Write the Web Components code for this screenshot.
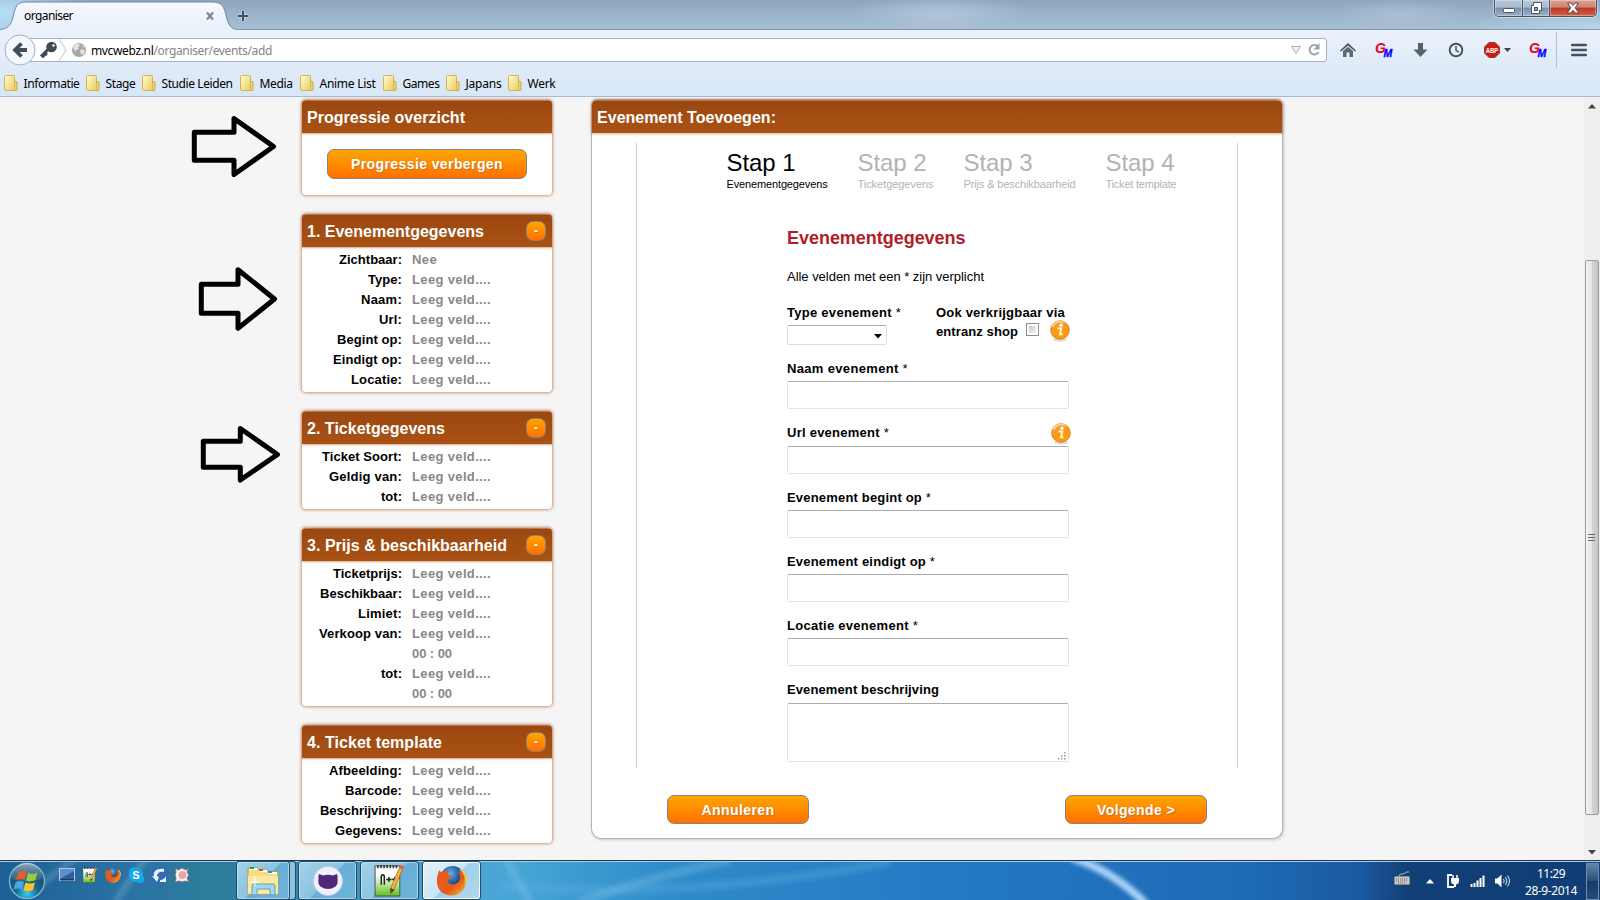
<!DOCTYPE html>
<html lang="nl">
<head>
<meta charset="utf-8">
<title>organiser</title>
<style>
html,body{margin:0;height:900px;overflow:hidden;background:#f5f5f5}
body{font:13px "Liberation Sans",Arial,sans-serif;color:#000}
</style>
</head>
<body>
<desktop-screen></desktop-screen>
<script>
const define = (name, html) => customElements.define(name, class extends HTMLElement {
  constructor() {
    super();
    const t = document.createElement('template');
    t.innerHTML = typeof html === 'function' ? html(this) : html;
    this.attachShadow({ mode: 'open' }).append(t.content.cloneNode(true));
  }
});
const UI = '"Noto Sans","Open Sans",sans-serif';

/* ---------- browser chrome ---------- */
define('window-controls', `<style>
:host{display:flex;height:17px;border:1px solid #46586e;border-top:0;border-radius:0 0 5px 5px;overflow:hidden;box-sizing:border-box;width:103px;box-shadow:0 0 0 1px #ffffff66}
span{display:flex;align-items:center;justify-content:center;background:linear-gradient(#b9c8da,#a9bacf 45%,#7890ad 50%,#9db1ca);border-right:1px solid #46586e;box-sizing:border-box;box-shadow:inset 0 0 0 1px #ffffff55}
.a{width:28px}.b{width:27px}.c{flex:1;border:0;background:linear-gradient(#dba294,#cf8272 45%,#b93a23 50%,#d1614a)}
svg{display:block}.a svg{margin-top:4px}</style>
<span class="a"><svg width="14" height="8"><rect x="1.500" y="2.500" width="11" height="4" rx="1" fill="#fff" stroke="#4c5565"/></svg></span>
<span class="b"><svg width="13" height="13"><path d="M3.500 .5h8v8h-2v3h-8v-8h2z" fill="#fff" stroke="#4c5565"/><rect x="4.500" y="5.500" width="3" height="3" fill="#8da0ba" stroke="#4c5565"/></svg></span>
<span class="c"><svg width="14" height="12" viewBox="0 0 14 12"><path d="M1.500 1h3.500l2 2.500L9 1h3.500L9.200 5.800 12.800 11H9L7 8.200 5 11H1.200l3.600-5.200z" fill="#fff" stroke="#56404a"/></svg></span>`);

define('tab-strip', `<style>
:host{display:flex;height:30px;align-items:flex-start;box-sizing:border-box;border-bottom:1px solid #8098b4;
background:radial-gradient(ellipse 90px 40px at 0 12px,#b8def8,#b8def800),radial-gradient(ellipse 130px 26px at 1595px 30px,#b6d6ec,#b6d6ec00),radial-gradient(ellipse 90px 18px at 940px 14px,#b0c5d9,#b0c5d900),radial-gradient(ellipse 70px 16px at 1400px 16px,#abbfd3,#abbfd300),linear-gradient(#8fa5be,#9bb3cb 50%,#a6bfd4)}
.tab{position:relative;width:235px;height:30px;display:flex;align-items:center}
.tab svg.s{position:absolute;left:0;top:0}
fit-text{position:relative;margin:1px 0 0 24px;font:12px ${UI}}
.x{position:relative;margin:1px 20px 0 auto}
.plus{margin:9px 0 0 1px}
window-controls{margin-left:auto;margin-right:3px}</style>
<div class="tab"><svg class="s" width="236" height="30"><defs><linearGradient id="g" x2="0" y2="1"><stop offset="0" stop-color="#f6f9fd"/><stop offset="1" stop-color="#e9f0fa"/></linearGradient></defs>
<path d="M-2 30V29.500C8 29.500 11 25 13 17 15 7 17 2 26 2H213C222 2 224 7 226 15 228 25 231 29.500 238 29.500V30z" fill="url(#g)"/><path d="M-2 29.500C8 29.500 11 25 13 17 15 7 17 2 26 2H213C222 2 224 7 226 15 228 25 231 29.500 238 29.500" fill="none" stroke="#6f88a6"/></svg>
<fit-text w="49">organiser</fit-text>
<svg class="x" width="10" height="10"><path d="M2 1.500 8 8.500M8 1.500 2 8.500" stroke="#7c8794" stroke-width="2.300"/></svg></div>
<svg class="plus" width="14" height="14"><path d="M7 2v10M2 7h10" stroke="#fff6" stroke-width="4"/><path d="M7 2v10M2 7h10" stroke="#3e5061" stroke-width="2"/></svg>
<window-controls></window-controls>`);

define('gm-icon', `<style>:host{display:block;width:18px;height:18px}svg{display:block;overflow:visible}</style>
<svg width="18" height="18" viewBox="0 0 18 18"><text x="0" y="12" font-family="Liberation Sans" font-size="14" font-style="italic" font-weight="bold" fill="#f00014">G<tspan x="8.500" y="15.500" font-size="10.500" fill="#00f" stroke="#00f" stroke-width=".3">M</tspan></text></svg>`);

define('nav-bar', `<style>
:host{display:flex;height:38px;align-items:center;box-sizing:border-box;padding-top:2px;background:linear-gradient(#eaf1fb,#e0ebf8)}
.back{flex:none;position:relative;z-index:1;margin-left:4px}
.url{margin-left:-8px;width:1299px;height:24px;box-sizing:border-box;background:#fff;border:1px solid #a3b4c9;border-radius:0 3px 3px 0;display:flex;align-items:center;padding-left:10px;flex:none;font:12px ${UI}}
.url svg{display:block;flex:none}
i{font-style:normal;color:#848484}
.tools{flex:1;display:grid;grid-template-columns:36px 36px 36px 36px 48px 32px 6px 38px;padding-left:3px;align-items:center;justify-items:center}
.tools svg{display:block}</style>
<svg class="back" width="32" height="32"><circle cx="16" cy="16" r="15" fill="#f4f8fd" stroke="#9fb2ca"/><path d="M17.500 9.500 11 16l6.500 6.500M11.500 16H23" fill="none" stroke="#414d59" stroke-width="3.800"/></svg>
<div class="url"><svg width="20" height="18" viewBox="0 0 20 18"><circle cx="12.500" cy="6" r="5.300" fill="#3f4b56"/><circle cx="14.500" cy="4.500" r="1.200" fill="#fff"/><path d="M9.500 8 2 15.500M3 14.500 5.500 15.800M5.500 12 8 14" stroke="#3f4b56" stroke-width="3"/></svg>
<svg style="margin-left:-1px" width="9" height="22"><path d="M1 0 8 11 1 22" fill="none" stroke="#cfd3d8" stroke-width="1.200"/></svg>
<svg style="margin-left:4px" width="16" height="16"><circle cx="8" cy="8" r="7" fill="#a6a6a6"/><path d="M2 5c2-3 4-3.500 6-3l1 2-2 1 1 2-3 1-1 2zM9 8l3-1 2 2-2 4-2-1zM11 3l2 1 1 2-2-1z" fill="#e3e3e3"/></svg>
<fit-text w="181" style="margin-left:4px">mvcwebz.nl<i>/organiser/events/add</i></fit-text>
<svg style="margin-left:auto;margin-right:5px" width="12" height="10"><path d="M1.500 1.500h9L6 8.500z" fill="#eceff2" stroke="#aab2bc"/></svg>
<svg style="margin-right:5px" width="14" height="14"><path d="M11 3.800A4.700 4.700 0 1 0 11.500 9" fill="none" stroke="#9aa5b1" stroke-width="2"/><path d="M12.500 0v6.500H6.500z" fill="#9aa5b1"/></svg></div>
<div class="tools">
<svg width="16" height="16"><path d="M0 8.500 8 1l8 7.500-1 1L8 3.500 1 9.500z" fill="#4a545e"/><path d="M3 9 8 4.700 13 9v6H9.500v-4.500h-3V15H3z" fill="#5d6873"/></svg>
<gm-icon></gm-icon>
<svg width="15" height="16"><path d="M5 1h5v6.500h4.500L7.500 15 .5 7.500H5z" fill="#56616c"/></svg>
<svg width="16" height="16"><circle cx="8" cy="8" r="6.300" fill="none" stroke="#4a545f" stroke-width="2"/><path d="M8 4v4.300l2.800 1.800" fill="none" stroke="#4a545f" stroke-width="1.500"/></svg>
<svg width="28" height="16"><path d="M5 .5h6L15.500 5v6L11 15.500H5L.5 11V5z" fill="#ce1b10" stroke="#8f3a34"/><text x="8" y="11" text-anchor="middle" font-family="Liberation Sans" font-size="8" font-weight="bold" fill="#fff" textLength="12.500" lengthAdjust="spacingAndGlyphs">ABP</text><path d="M20 6h7l-3.500 4z" fill="#444"/></svg>
<gm-icon></gm-icon>
<svg width="2" height="36"><path d="M.5 0v36" stroke="#b2bfcf"/></svg>
<svg width="16" height="14"><path d="M1.200 2h13.600M1.200 7h13.600M1.200 12h13.600" stroke="#45515d" stroke-width="2.500" stroke-linecap="round"/></svg>
</div>`);

define('book-mark', `<style>:host{display:flex;align-items:center;gap:5.500px;font:12px ${UI}}svg{display:block;flex:none;margin-top:-1px}</style>
<svg width="14" height="17"><defs><linearGradient id="g" x2="1" y2="1"><stop offset="0" stop-color="#fffbd0"/><stop offset="1" stop-color="#eacb63"/></linearGradient></defs><rect x="8" y="6.500" width="5" height="9" rx="1" fill="#f0d777" stroke="#c7a33c"/><rect x=".5" y=".5" width="10" height="15" rx="1" fill="url(#g)" stroke="#d5b54e"/></svg><slot></slot>`);

define('bookmark-bar', `<style>:host{display:grid;grid-template-columns:82px 56px 98px 60px 83px 63px 62px 60px;padding-left:4px;height:29px;box-sizing:border-box;border-bottom:1px solid #a6bbd3;background:linear-gradient(#dfeaf8,#d8e7f7);padding-top:3px;white-space:nowrap}</style>
${[['Informatie',56],['Stage',30],['Studie Leiden',71],['Media',33],['Anime List',56],['Games',37],['Japans',36],['Werk',28]].map(b=>`<book-mark><fit-text w="${b[1]}">${b[0]}</fit-text></book-mark>`).join('')}`);

/* ---------- site widgets ---------- */
define('orange-button', `<style>:host{display:flex;align-items:center;justify-content:center;box-sizing:border-box;border:1px solid #8b8378;border-radius:7px;background:linear-gradient(#fba505,#ff9000 40%,#ff7000);color:#fff;font-weight:bold;font-size:14px;text-shadow:1px 1px 1px #9a6a3a99}</style><slot></slot>`);

define('side-card', h => `<style>
:host{display:block;width:250px;background:#fff;border-radius:4px;box-shadow:0 0 3px 1px #b5632fa8}
header{height:33px;box-sizing:border-box;padding:0 6px 0 5px;display:flex;align-items:center;justify-content:space-between;background:linear-gradient(#b57a55 1px,#9a4710 1px,#aa5214);border-radius:4px 4px 0 0;box-shadow:0 1px 2px #a9521480;color:#fff;font-weight:bold;font-size:16px;line-height:18px}
header>fit-text{margin-top:2px}
orange-button{width:20px;height:20px;margin-top:1px;font-size:12px;line-height:16px}</style>
<header><fit-text w="${h.getAttribute('w')}">${h.getAttribute('title-text')}</fit-text>${h.hasAttribute('fold') ? '<orange-button><span>-</span></orange-button>' : ''}</header><slot></slot>`);

define('field-rows', `<style>:host{display:block;padding:3px 0 2px;font-weight:bold}</style><slot></slot>`);
define('field-row', h => `<style>:host{display:grid;grid-template-columns:100px 1fr;column-gap:10px;height:20px;line-height:20px}b{text-align:right}span{color:#888}</style>
<b>${h.getAttribute('l') ? `<fit-text w="${h.getAttribute('lw')}">${h.getAttribute('l')}</fit-text>` : ''}</b><span><fit-text w="${h.getAttribute('vw')||79}">${h.getAttribute('v')||'Leeg veld....'}</fit-text></span>`);

const row = (l, lw, v = '', vw = '') => `<field-row l="${l}" lw="${lw}" v="${v}" vw="${vw}"></field-row>`;
define('side-bar', `<style>:host{display:flex;flex-direction:column;gap:19px;width:250px}
.p{height:62px;box-sizing:border-box;padding:16px 25px}.p orange-button{height:30px}</style>
<side-card title-text="Progressie overzicht" w="158"><div class="p"><orange-button><fit-text w="152">Progressie verbergen</fit-text></orange-button></div></side-card>
<side-card fold title-text="1. Evenementgegevens" w="177"><field-rows>${row('Zichtbaar:',63,'Nee',25)+row('Type:',34)+row('Naam:',41)+row('Url:',23)+row('Begint op:',65)+row('Eindigt op:',69)+row('Locatie:',51)}</field-rows></side-card>
<side-card fold title-text="2. Ticketgegevens" w="138"><field-rows>${row('Ticket Soort:',80)+row('Geldig van:',73)+row('tot:',21)}</field-rows></side-card>
<side-card fold title-text="3. Prijs &amp;amp; beschikbaarheid" w="200"><field-rows>${row('Ticketprijs:',69)+row('Beschikbaar:',82)+row('Limiet:',44)+row('Verkoop van:',83)+row('',0,'00 : 00',40)+row('tot:',21)+row('',0,'00 : 00',40)}</field-rows></side-card>
<side-card fold title-text="4. Ticket template" w="135"><field-rows>${row('Afbeelding:',73)+row('Barcode:',57)+row('Beschrijving:',82)+row('Gegevens:',67)}</field-rows></side-card>`);

define('info-icon', `<style>:host{display:block;width:22px;height:24px}svg{display:block}</style>
<svg width="22" height="24"><defs><radialGradient id="g" cx=".62" cy=".7" r=".75"><stop offset="0" stop-color="#ff9b00"/><stop offset=".5" stop-color="#fb9a10"/><stop offset="1" stop-color="#f0a040"/></radialGradient></defs><ellipse cx="11" cy="20.500" rx="7" ry="2" fill="#0002"/><circle cx="11" cy="11" r="9.300" fill="url(#g)" stroke="#c97c1e" stroke-width=".8"/><path d="M3.500 8a8 8 0 0 1 12-4" fill="none" stroke="#ffd69a" stroke-width="1.500"/><circle cx="12" cy="6.300" r="1.700" fill="#fff"/><path d="M8.500 9.500H12.300L11 15.300H13.500" fill="none" stroke="#fff3e0" stroke-width="1.900"/></svg>`);

define('step-item', h => `<style>:host{display:block;color:#b3b3b3}:host([on]){color:#000}div{font-size:24px;line-height:27px;margin-bottom:2px;height:27px}p{margin:0;font-size:11px;line-height:13px}</style><div><fit-text w="69"><slot></slot></fit-text></div><p><fit-text w="${h.getAttribute('sw')}">${h.getAttribute('sub')}</fit-text></p>`);

const star = s => s.replace('*', '<span style="font-weight:normal">*</span>');
define('form-field', h => `<style>:host{display:block;margin-bottom:15px;width:282px}
label{display:flex;justify-content:space-between;height:21px;line-height:17px;font-weight:bold;box-sizing:border-box}
:host([up]) label fit-text{margin-top:-1px}
.i{height:28px;box-sizing:border-box;border:1px solid #e1e4ec;border-top-color:#ababb0;border-radius:2px;background:#fff;display:flex;justify-content:flex-end;align-items:flex-end}
:host([area]) .i{height:59px}info-icon{margin:-3px -3px 0 0}svg{margin:1px 2px}</style>
<label><fit-text w="${h.getAttribute('w')}">${star(h.getAttribute('label'))}</fit-text>${h.hasAttribute('info')?'<info-icon></info-icon>':''}</label>
<div class="i">${h.hasAttribute('area')?'<svg width="8" height="8"><path d="M6 0h1.500v1.500H6zM6 3h1.500v1.500H6zM6 6h1.500v1.500H6zM3 3h1.500v1.500H3zM3 6h1.500v1.500H3zM0 6h1.500v1.500H0z" fill="#999"/></svg>':''}</div>`);

define('event-form', `<style>
:host{display:flex;flex-direction:column;width:690px;height:738px;background:#fff;border-radius:5px 5px 9px 9px;box-shadow:0 0 0 1px #b4b4b4,1px 1px 3px 1px #8886}
header{height:33px;box-sizing:border-box;background:linear-gradient(#b57a55 1px,#9a4710 1px,#aa5214);border-radius:5px 5px 0 0;box-shadow:0 0 3px 1px #a9521470;color:#fff;font-weight:bold;font-size:16px;line-height:34px;padding:1px 0 0 5px}
.frame{margin:10px 44px 0;width:602px;height:625px;box-sizing:border-box;border:solid #ccc;border-width:0 1px;padding:6px 0 0 90px}
.steps{display:flex;gap:30px;margin-left:-.5px}
.form{padding-left:60px}
h2{margin:37px 0 21px;font-size:18px;line-height:20px;color:#b01c2b}
p{margin:0 0 19px;line-height:15px}
.top{display:grid;grid-template-columns:149px 1fr;font-weight:bold;line-height:19px;height:42px;margin-bottom:15px}
.sel{width:100px;height:20px;margin-top:3px;box-sizing:border-box;border:1px solid #dadde8;border-top-color:#ababb0;border-radius:2px;display:flex;align-items:center;justify-content:flex-end;padding:2px 4px 0 0}
.shop{display:flex;align-items:flex-start}
.cb{width:13px;height:13px;box-sizing:border-box;border:1px solid #8e8f8f;background:linear-gradient(135deg,#c4c8ce,#f6f6f6) content-box;padding:2px;margin:1px 0 0 8px}
.shop info-icon{margin:-3px 0 -5px 10px}
.act{display:flex;justify-content:space-between;margin:27px 75px 0}
.act orange-button{width:142px;height:29px;font-size:14px}</style>
<header><fit-text w="179">Evenement Toevoegen:</fit-text></header>
<div class="frame"><div class="steps"><step-item on sw="101" sub="Evenementgegevens">Stap 1</step-item><step-item sw="76" sub="Ticketgegevens">Stap 2</step-item><step-item sw="112" sub="Prijs &amp;amp; beschikbaarheid">Stap 3</step-item><step-item sw="71" sub="Ticket template">Stap 4</step-item></div>
<div class="form"><h2><fit-text w="178.500">Evenementgegevens</fit-text></h2><p><fit-text w="197">Alle velden met een * zijn verplicht</fit-text></p>
<div class="top"><div><fit-text w="114">${star('Type evenement *')}</fit-text><div class="sel"><svg width="8" height="5"><path d="M0 0h8L4 4.500z"/></svg></div></div><div><fit-text w="129">Ook verkrijgbaar via</fit-text><div class="shop"><fit-text w="82">entranz shop</fit-text><span class="cb"></span><info-icon></info-icon></div></div></div>
<form-field label="Naam evenement *" w="121" style="margin-bottom:16px"></form-field><form-field info up label="Url evenement *" w="102"></form-field><form-field label="Evenement begint op *" w="144"></form-field><form-field label="Evenement eindigt op *" w="148"></form-field><form-field label="Locatie evenement *" w="131" style="margin-bottom:16px"></form-field><form-field area up label="Evenement beschrijving" w="152"></form-field></div></div>
<div class="act"><orange-button><fit-text w="73">Annuleren</fit-text></orange-button><orange-button><fit-text w="78">Volgende &gt;</fit-text></orange-button></div>`);

define('scroll-bar', `<style>:host{display:flex;flex-direction:column;align-items:center;width:16px;background:#efefef;box-sizing:border-box;padding:7px 0 5px}
.t{width:14px;height:555px;margin-top:151px;box-sizing:border-box;border:1px solid #9b9b9b;border-radius:2px;background:linear-gradient(90deg,#f4f4f4,#e6e6e6 48%,#d4d4d6 52%,#c4c5c8);display:flex;align-items:center;justify-content:center}
.d{margin-top:auto}svg{display:block}</style><svg width="8" height="5"><path d="M4 0 8 4.500H0z" fill="#444"/></svg><div class="t"><svg width="8" height="9"><path d="M0 1.500h7M0 4.500h7M0 7.500h7" stroke="#666"/></svg></div><svg class="d" width="8" height="5"><path d="M4 4.500 8 0H0z" fill="#444"/></svg>`);

define('drawn-arrows', `<style>:host{position:absolute;left:0;top:0;pointer-events:none}svg{display:block}</style>
<svg width="300" height="500" fill="none" stroke="#000" stroke-width="5" stroke-linejoin="round"><path d="M194.300 132.300H234V118.500L273.500 146.500 234 174.500V160.300H194.300z"/><path d="M201.300 284.300H238V269.700L274.500 299 238 328.300V313.300H201.300z"/><path d="M203.300 441.300H240.300V428.500L277.500 454.500 240.300 480V467.300H203.300z"/></svg>`);

/* ---------- taskbar ---------- */
const fox = s => `<svg width="${s}" height="${s}" viewBox="0 0 30 30"><defs><radialGradient id="b" cx=".4" cy=".3"><stop offset="0" stop-color="#5fb4e8"/><stop offset="1" stop-color="#123c7c"/></radialGradient><linearGradient id="o" x2="1" y2="1"><stop offset="0" stop-color="#e8601c"/><stop offset=".6" stop-color="#e6581a"/><stop offset="1" stop-color="#f9c02c"/></linearGradient></defs><circle cx="16" cy="13" r="12" fill="url(#b)"/><path d="M3 5C4 6 5 7 7 7 9 5 12 5 13 6 11 7 11 9 12 10L16 11C15 13 12 13 11 15 12 19 17 20 21 17 24 14 24 9 21 5 27 7 28 11 27 9L29 13C30 23 23 30 14 29.500 6 29 0 23 1 14 1 10 2 8 3 5z" fill="url(#o)"/><path d="M22 4c6 4 7 10 5 16 3-3 3-8 2-11-2-3-4-5-7-5z" fill="#fbc43a"/></svg>`;
const note = (w, h) => `<svg width="${w}" height="${h}" viewBox="0 0 30 32"><defs><linearGradient id="n" x2="0" y2="1"><stop offset=".3" stop-color="#fff"/><stop offset="1" stop-color="#5fc01c"/></linearGradient></defs><path d="M1 2H25V31H1z" fill="url(#n)" stroke="#555"/><path d="M3 2.500H24" stroke="#333" stroke-width="3" stroke-dasharray="1.500 1.500"/><path d="M7 20V13q0-2.500 1.500-2.500T10 13v7M12 15h5M14.500 12.500v5M17.500 15h5M20 12.500v5" fill="none" stroke="#222" stroke-width="1.400"/><path d="M26.500 3.500 17 26" stroke="#b66d1b" stroke-width="4"/><path d="M26.500 3.500 17 26" stroke="#f6b63c" stroke-width="2.500"/><path d="M27.500 1.500 26 5" stroke="#d4685a" stroke-width="4"/><path d="M15.500 23 16 29l4-4z" fill="#5a4636"/></svg>`;
define('task-button', `<style>:host{display:flex;align-items:center;justify-content:center;box-sizing:border-box;width:59px;height:39px;border:1px solid #234a66;border-radius:3px;box-shadow:inset 0 0 0 1px #cdeafc99;background:linear-gradient(135deg,#a5d2e9,#8bc3e0 49%,#68aed4 51%,#70b5da)}
:host([active]){background:linear-gradient(135deg,#e3f3fb,#c8e5f5 49%,#9fd0ec 51%,#b0d9ef);box-shadow:inset 0 0 0 1px #fff}</style><slot></slot>`);
define('start-orb', `<style>:host{display:block;width:38px;height:38px}svg{display:block}</style><svg width="38" height="38"><defs><radialGradient id="a" cx=".5" cy=".85" r=".8"><stop offset="0" stop-color="#35d2f4"/><stop offset=".4" stop-color="#17648f"/><stop offset="1" stop-color="#1d4460"/></radialGradient><linearGradient id="h" x2="0" y2="1"><stop offset="0" stop-color="#e4eef5"/><stop offset="1" stop-color="#7aa4bd44"/></linearGradient></defs><circle cx="19" cy="19" r="17.500" fill="url(#a)" stroke="#76afc9" stroke-width="1.500"/><path d="M3 17a16 16 0 0 1 32 0q-16 5-32 0z" fill="url(#h)" opacity=".6"/><path d="M10 11q4-3 8.500-.7L16.500 18q-4-2-8.500.5z" fill="#ee5a24"/><path d="M20 11q4.500 2.300 9.500-.5L27.500 18q-5 2.500-9.500.7z" fill="#9ccb3b"/><path d="M7.500 20.500q4-2.500 8.500-.5L14 27.500q-4-2-8.500.3z" fill="#4aa6e8"/><path d="M17.500 20.500q4.500 2 9.500-.3L25 28q-5 2.200-9.500.3z" fill="#fdc424"/></svg>`);
define('task-bar', `<style>
:host{display:flex;position:relative;height:40px;box-sizing:border-box;border-top:1px solid #1f3a56;box-shadow:inset 0 1px #a9cbe6;padding-top:1px;color:#fff;
background:linear-gradient(90deg,#1d5f97,#2a72a5 8%,#2d7c9c 13%,#2f7d9d 15%,#4aa5d4 29%,#48a6d6 32%,#2f8bc9 42%,#2379c4 60%,#1e6ab5 78%,#1a5aa0 85%,#123f75 88%,#103e74)}
.streak{position:absolute;left:0;top:1px}
start-orb{margin-left:8px;position:relative}
.quick{display:flex;position:relative;gap:7px;margin:5px 0 0 12px;height:16px}.quick svg{display:block;width:16px;height:16px}
.tasks{display:flex;gap:3px;position:relative;margin-left:46px;margin-top:-1px}
.tasks>div{display:flex;padding-right:5px;margin-right:-1px;box-sizing:border-box;border:1px solid #234a66;border-left:0;border-radius:3px;height:39px;background:#8dc3df}
.tasks>div task-button{margin-top:-1px;width:54px}
.tray{margin-left:auto;display:flex;position:relative;align-items:center}.tray svg{display:block}
.clock{width:56px;text-align:center;font:12px/17px ${UI};margin:1px 0 0 13px}
.show{width:13px;height:37px;margin:0 1px 0 7px;box-sizing:border-box;border:1px solid #6d8cae;background:linear-gradient(#6184ab,#2a4c78 50%,#173a68 50%,#244c80)}</style>
<svg class="streak" width="1600" height="38"><defs><filter id="f"><feGaussianBlur stdDeviation="2"/></filter></defs><g fill="none" filter="url(#f)"><path d="M1072-4Q1112 8 1146 42" stroke="#a7d2f7" stroke-width="8"/><path d="M500 24Q690 38 890 0" stroke="#5db0e055" stroke-width="9"/><path d="M580 40Q640 18 730-2M505-5 530 42" stroke="#7cc4e855" stroke-width="9"/><path d="M30 30 75-3M115 40 145-3" stroke="#7ab3c855" stroke-width="7"/></g></svg>
<start-orb></start-orb>
<div class="quick"><svg style="margin-left:1px"><rect x=".5" y="1.500" width="15" height="12" fill="#2c5da8" stroke="#b9cbdc"/><path d="M1 12 15 4V2H1z" fill="#5b8ed0"/><rect x="1" y="12" width="14" height="1.500" fill="#334"/></svg>${note(16,16)}${fox(16)}
<svg><path d="M1 4a4 4 0 0 1 6-3 7 7 0 0 1 8 8 4 4 0 0 1-6 6A7 7 0 0 1 1 7z" fill="#13a8ec"/><text x="8" y="12" font-family="Liberation Sans" font-weight="bold" font-size="11" fill="#fff" text-anchor="middle">S</text></svg>
<svg><rect x=".5" y=".5" width="15" height="15" rx="2" fill="#3467c0"/><path d="M13 2C5 1 2 5 3 9l-2 0 5 6 2-5-2-1C6 6 9 4 13 5zM9 13q4 0 6-4v6H9z" fill="#e8f2ff"/></svg>
<svg><path d="M1 1 4 3 8 1l4 2 3-2-2 4 2 3-2 3 2 4-4-1-3 1-3-1-4 1 1-4-1-3 1-3z" fill="#f6eeee" stroke="#7a6a70" stroke-width=".8"/><circle cx="8.500" cy="8" r="4" fill="#e8a9a6"/></svg></div>
<div class="tasks"><div><task-button><svg width="34" height="31" viewBox="0 0 34 31"><path d="M2 6V3H12L14 5H22L24 7H32V29H2z" fill="#f5dd86" stroke="#b99a45"/><path d="M4 4h7M14 6h7M23 8h8" stroke="#fff" stroke-width="2"/><rect x="4" y="2" width="4" height="2" fill="#17a84a"/><rect x="13" y="4" width="4" height="2" fill="#d94f2b"/><rect x="22" y="6" width="4" height="2" fill="#2e8fd9"/><path d="M2 11H32V29H2z" fill="#fbe9a2"/><path d="M6 30V21q0-2 2-2H27q2 0 2 2V30H24V24H11v6z" fill="#a3d8ec" stroke="#5ba1c4"/><path d="M9 12v9M4 17h10" stroke="#fff"/></svg></task-button></div>
<task-button><svg width="32" height="32"><circle cx="16" cy="16" r="14.500" fill="#eef0fa" stroke="#c9cfe6"/><path d="M7 9l4 1.500q5-1.500 10 0L25 9q1 3 .5 5 1 5-2 7.500Q20 24 16 24t-7.500-2.500q-3-2.500-2-7.500Q6 12 7 9z" fill="#50257a"/></svg></task-button>
<task-button>${note(31,33)}</task-button><task-button active>${fox(31)}</task-button></div>
<div class="tray"><svg width="17" height="15" style="margin-right:15px;margin-top:-5px"><path d="M5 5q0-2 3-2t4-2h3" fill="none" stroke="#b8bcc2"/><rect x=".5" y="5.500" width="15" height="8" rx="1" fill="#c8c8c8" stroke="#8a8d92"/><path d="M2 8h12M2 10h12M4 12h8" stroke="#666" stroke-dasharray="1 1"/></svg>
<svg width="8" height="5" style="margin-right:11px"><path d="M4 0 8 4.500H0z" fill="#fff"/></svg>
<svg width="16" height="18" style="margin-right:9px"><path d="M7 3H3v12h6" fill="none" stroke="#fff" stroke-width="1.800"/><path d="M8 3v3M12 3v3" stroke="#fff" stroke-width="1.500"/><path d="M6 6h8v3q0 3-3 3.500V15H9v-2.500Q6 12 6 9z" fill="#fff"/></svg>
<svg width="16" height="14" style="margin-right:8px"><path d="M1.500 13v-3M4.500 13v-4M7.500 13V6.500M10.500 13V4M13.500 13V1.500" stroke="#fff" stroke-width="2"/></svg>
<svg width="16" height="16"><path d="M1 5.500h2.500L7.500 1.500v13L3.500 10.500H1z" fill="#fff"/><path d="M9.500 6q1.500 2 0 4M11.500 4q3 4 0 8M13.500 2.500q4 5.500 0 11" fill="none" stroke="#dfe8f2"/></svg>
<div class="clock"><fit-text w="28">11:29</fit-text><br><fit-text w="52">28-9-2014</fit-text></div><div class="show"></div></div>`);

define('desktop-screen', `<style>:host{display:flex;flex-direction:column;width:1600px;height:900px;position:relative}
main{flex:1;min-height:0;display:flex;background:#f5f5f5;overflow:hidden}
side-bar{margin:3px 0 0 302px}event-form{margin:3px 0 0 40px}scroll-bar{margin-left:auto}</style>
<tab-strip></tab-strip><nav-bar></nav-bar><bookmark-bar></bookmark-bar>
<main><side-bar></side-bar><event-form></event-form><scroll-bar></scroll-bar></main><task-bar></task-bar><drawn-arrows></drawn-arrows>`);

/* Spreads its text evenly over a given width. */
customElements.define('fit-text', class extends HTMLElement {
  constructor() {
    super();
    this.attachShadow({ mode: 'open' }).innerHTML = '<style>:host{display:inline-block;white-space:nowrap}</style><slot></slot>';
  }
  connectedCallback() {
    const slot = this.querySelector('slot');
    const text = slot ? slot.assignedNodes().map(n => n.textContent).join('') : this.textContent;
    const natural = this.getBoundingClientRect().width;
    if (natural && text.length) this.style.letterSpacing = ((this.getAttribute('w') - natural) / text.length) + 'px';
  }
});
</script>
</body>
</html>
